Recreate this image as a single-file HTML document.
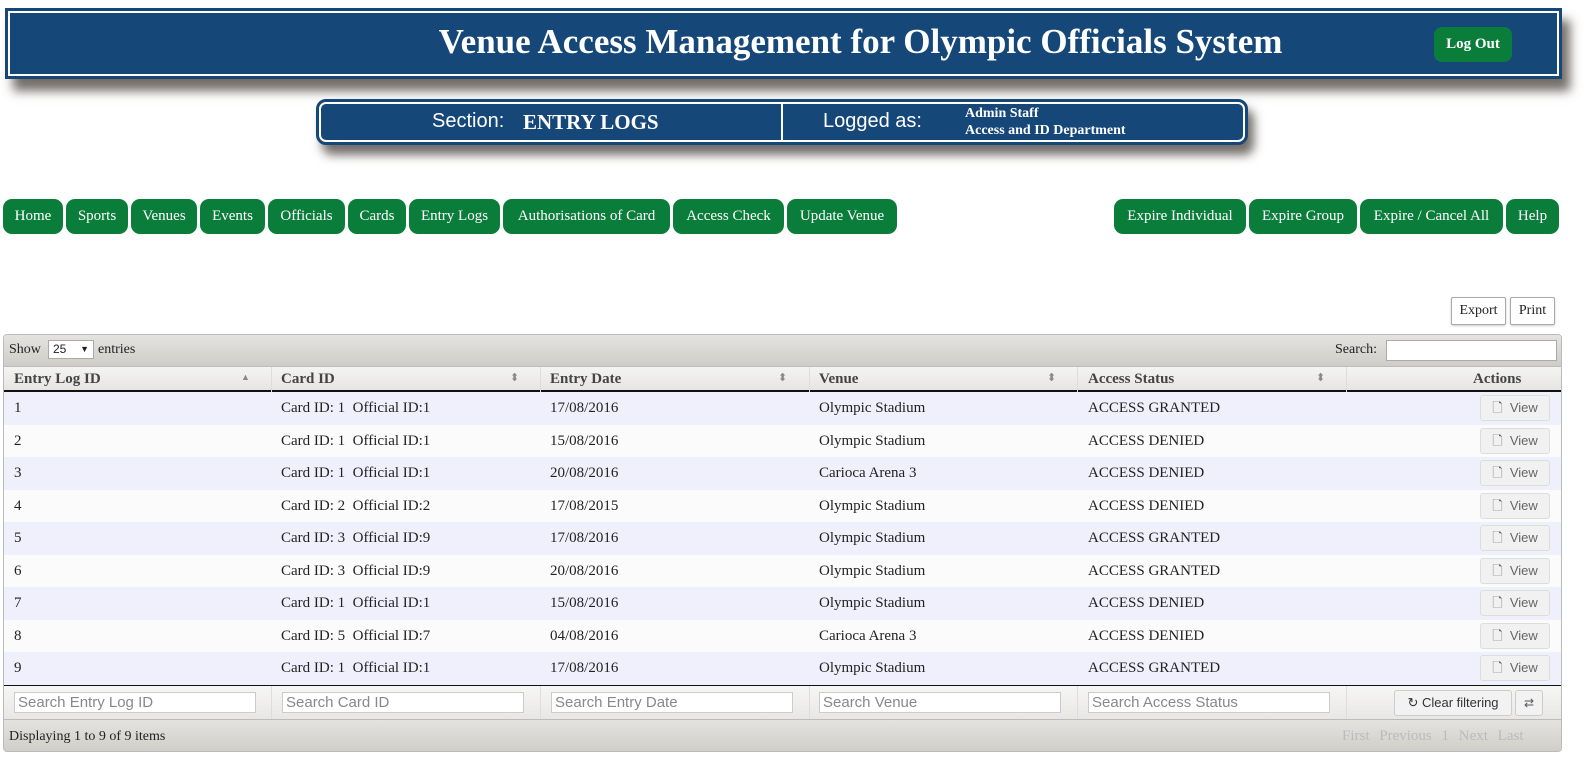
<!DOCTYPE html>
<html><head><meta charset="utf-8"><style>
*{box-sizing:border-box;margin:0;padding:0}
body{width:1593px;height:771px;background:#fff;font-family:"Liberation Serif",serif;position:relative;overflow:hidden;color:#222}
.abs{position:absolute}
#hdr{left:5px;top:8px;width:1557px;height:71px;background:#154778;border:2px solid #154778;outline:2px solid #fff;outline-offset:-5px;box-shadow:8px 12px 10px rgba(90,85,80,.85)}
#hdr h1{position:absolute;left:0;width:1707px;top:12px;text-align:center;color:#fff;font-size:35px;font-weight:bold}
#logout{left:1434px;top:27px;width:78px;height:35px;background:#0b7d3b;border-radius:8px;color:#fff;font-weight:bold;font-size:15px;text-align:center;line-height:35px}
#sec{left:316px;top:99px;width:932px;height:46px;background:#154778;border:2px solid #154778;outline:2px solid #fff;outline-offset:-5px;border-radius:10px;box-shadow:6px 10px 10px rgba(90,85,80,.85);color:#fff}
.nav{top:199px;height:35px;background:#0b7d3b;border-radius:9px;color:#fff;font-size:15px;text-align:center;line-height:35px}
.btn{background:#fff;border:1px solid #aaa;border-radius:2px;font-size:14px;text-align:center;line-height:26px;box-shadow:0 1px 2px rgba(0,0,0,.2)}
#tbl{left:3px;top:334px;width:1559px;height:418px;border:1px solid #bbb;border-radius:4px;background:#fff;overflow:hidden}
.bar{position:absolute;left:0;width:100%;background:linear-gradient(#e4e3df,#cfcdc8)}
.row{position:absolute;left:0;width:100%;height:32.5px;font-size:15px;line-height:32px}
.row span{position:absolute}
.vb{position:absolute;left:1476px;width:70px;height:26px;top:3px;border:1px solid #ddd;border-radius:3px;background:#f1f1f1;color:#666;font-family:"Liberation Sans",sans-serif;font-size:13px;line-height:24px;text-align:center}
.th{position:absolute;top:0;font-weight:bold;font-size:15px;color:#444;line-height:25px}
.vl{position:absolute;width:1px;background:#ddd}
.fi{position:absolute;top:6px;width:242px;height:21px;border:1px solid #ccc;background:#fff;font-family:"Liberation Sans",sans-serif;font-size:15px;color:#888;line-height:19px;padding-left:3px}
</style></head><body>
<div id="hdr" class="abs"><h1>Venue Access Management for Olympic Officials System</h1></div>
<div id="logout" class="abs">Log Out</div>
<div id="sec" class="abs">
 <div class="abs" style="left:114px;top:9px;font-family:'Liberation Sans',sans-serif;font-size:20px">Section:</div>
 <div class="abs" style="left:205px;top:9px;font-size:21px;font-weight:bold">ENTRY LOGS</div>
 <div class="abs" style="left:463px;top:2px;width:2px;height:38px;background:#fff"></div>
 <div class="abs" style="left:505px;top:9px;font-family:'Liberation Sans',sans-serif;font-size:20px">Logged as:</div>
 <div class="abs" style="left:647px;top:4px;font-size:14px;font-weight:bold;line-height:17px">Admin Staff<br>Access and ID Department</div>
</div>
<div class="abs nav" style="left:3px;width:60px">Home</div>
<div class="abs nav" style="left:66px;width:62px">Sports</div>
<div class="abs nav" style="left:131px;width:66px">Venues</div>
<div class="abs nav" style="left:200px;width:65px">Events</div>
<div class="abs nav" style="left:268px;width:77px">Officials</div>
<div class="abs nav" style="left:348px;width:58px">Cards</div>
<div class="abs nav" style="left:409px;width:91px">Entry Logs</div>
<div class="abs nav" style="left:503px;width:167px">Authorisations of Card</div>
<div class="abs nav" style="left:673px;width:111px">Access Check</div>
<div class="abs nav" style="left:787px;width:110px">Update Venue</div>
<div class="abs nav" style="left:1114px;width:132px">Expire Individual</div>
<div class="abs nav" style="left:1249px;width:108px">Expire Group</div>
<div class="abs nav" style="left:1360px;width:143px">Expire / Cancel All</div>
<div class="abs nav" style="left:1506px;width:53px">Help</div>
<div class="abs btn" style="left:1451px;top:297px;width:55px;height:28px">Export</div>
<div class="abs btn" style="left:1510px;top:297px;width:45px;height:28px">Print</div>
<div id="tbl" class="abs">
 <div class="bar" style="top:0;height:32px;border-bottom:1px solid #bbb;font-size:14px">
  <span class="abs" style="left:5px;top:7px">Show</span>
  <span class="abs" style="left:44px;top:5px;width:46px;height:19px;border:1px solid #aaa;background:#fff;padding-left:4px;line-height:17px;font-family:'Liberation Sans',sans-serif;font-size:12px">25 <span style="position:absolute;right:4px;font-size:9px">▼</span></span>
  <span class="abs" style="left:94px;top:7px">entries</span>
  <span class="abs" style="left:1331px;top:7px">Search:</span>
  <span class="abs" style="left:1382px;top:5px;width:171px;height:21px;border:1px solid #aaa;background:#fff"></span>
 </div>
 <div class="abs" style="top:32px;left:0;width:100%;height:25px;background:linear-gradient(#f4f4f2,#e6e5e2);border-bottom:2px solid #111">
  <span class="th" style="left:10px">Entry Log ID</span><span class="abs" style="left:237px;top:5px;font-size:9px;color:#888">▲</span>
  <span class="th" style="left:277px">Card ID</span><span class="abs" style="left:506px;top:4px;font-size:11px;color:#888">⬍</span>
  <span class="th" style="left:546px">Entry Date</span><span class="abs" style="left:774px;top:4px;font-size:11px;color:#888">⬍</span>
  <span class="th" style="left:815px">Venue</span><span class="abs" style="left:1043px;top:4px;font-size:11px;color:#888">⬍</span>
  <span class="th" style="left:1084px">Access Status</span><span class="abs" style="left:1312px;top:4px;font-size:11px;color:#888">⬍</span>
  <span class="th" style="left:1469px">Actions</span>
  <div class="vl" style="left:267px;top:0;height:25px"></div><div class="vl" style="left:536px;top:0;height:25px"></div><div class="vl" style="left:805px;top:0;height:25px"></div><div class="vl" style="left:1073px;top:0;height:25px"></div><div class="vl" style="left:1342px;top:0;height:25px"></div>
 </div>
 <div class="abs" style="top:57px;left:0;width:100%;height:293px">
  <div class="row" style="top:0;background:#f0f0fd"><span style="left:10px">1</span><span style="left:277px">Card ID: 1&nbsp; Official ID:1</span><span style="left:546px">17/08/2016</span><span style="left:815px">Olympic Stadium</span><span style="left:1084px">ACCESS GRANTED</span><div class="vb">🗋&nbsp; View</div></div>
  <div class="row" style="top:32.5px;background:#fbfbfb"><span style="left:10px">2</span><span style="left:277px">Card ID: 1&nbsp; Official ID:1</span><span style="left:546px">15/08/2016</span><span style="left:815px">Olympic Stadium</span><span style="left:1084px">ACCESS DENIED</span><div class="vb">🗋&nbsp; View</div></div>
  <div class="row" style="top:65px;background:#f0f0fd"><span style="left:10px">3</span><span style="left:277px">Card ID: 1&nbsp; Official ID:1</span><span style="left:546px">20/08/2016</span><span style="left:815px">Carioca Arena 3</span><span style="left:1084px">ACCESS DENIED</span><div class="vb">🗋&nbsp; View</div></div>
  <div class="row" style="top:97.5px;background:#fbfbfb"><span style="left:10px">4</span><span style="left:277px">Card ID: 2&nbsp; Official ID:2</span><span style="left:546px">17/08/2015</span><span style="left:815px">Olympic Stadium</span><span style="left:1084px">ACCESS DENIED</span><div class="vb">🗋&nbsp; View</div></div>
  <div class="row" style="top:130px;background:#f0f0fd"><span style="left:10px">5</span><span style="left:277px">Card ID: 3&nbsp; Official ID:9</span><span style="left:546px">17/08/2016</span><span style="left:815px">Olympic Stadium</span><span style="left:1084px">ACCESS GRANTED</span><div class="vb">🗋&nbsp; View</div></div>
  <div class="row" style="top:162.5px;background:#fbfbfb"><span style="left:10px">6</span><span style="left:277px">Card ID: 3&nbsp; Official ID:9</span><span style="left:546px">20/08/2016</span><span style="left:815px">Olympic Stadium</span><span style="left:1084px">ACCESS GRANTED</span><div class="vb">🗋&nbsp; View</div></div>
  <div class="row" style="top:195px;background:#f0f0fd"><span style="left:10px">7</span><span style="left:277px">Card ID: 1&nbsp; Official ID:1</span><span style="left:546px">15/08/2016</span><span style="left:815px">Olympic Stadium</span><span style="left:1084px">ACCESS DENIED</span><div class="vb">🗋&nbsp; View</div></div>
  <div class="row" style="top:227.5px;background:#fbfbfb"><span style="left:10px">8</span><span style="left:277px">Card ID: 5&nbsp; Official ID:7</span><span style="left:546px">04/08/2016</span><span style="left:815px">Carioca Arena 3</span><span style="left:1084px">ACCESS DENIED</span><div class="vb">🗋&nbsp; View</div></div>
  <div class="row" style="top:260px;background:#f0f0fd"><span style="left:10px">9</span><span style="left:277px">Card ID: 1&nbsp; Official ID:1</span><span style="left:546px">17/08/2016</span><span style="left:815px">Olympic Stadium</span><span style="left:1084px">ACCESS GRANTED</span><div class="vb">🗋&nbsp; View</div></div>
 </div>
 <div class="abs" style="top:350px;left:0;width:100%;height:34px;background:linear-gradient(#f6f6f4,#e8e7e4);border-top:1px solid #111">
  <div class="fi" style="left:10px">Search Entry Log ID</div>
  <div class="fi" style="left:278px">Search Card ID</div>
  <div class="fi" style="left:547px">Search Entry Date</div>
  <div class="fi" style="left:815px">Search Venue</div>
  <div class="fi" style="left:1084px">Search Access Status</div>
  <div class="vl" style="left:267px;top:0;height:34px"></div><div class="vl" style="left:536px;top:0;height:34px"></div><div class="vl" style="left:805px;top:0;height:34px"></div><div class="vl" style="left:1073px;top:0;height:34px"></div><div class="vl" style="left:1342px;top:0;height:34px"></div>
  <div class="abs" style="left:1390px;top:4px;width:118px;height:26px;border:1px solid #ccc;border-radius:3px;background:#f2f2f2;font-family:'Liberation Sans',sans-serif;font-size:13px;line-height:24px;text-align:center;color:#333">↻ Clear filtering</div>
  <div class="abs" style="left:1511px;top:4px;width:28px;height:26px;border:1px solid #ccc;border-radius:3px;background:#f2f2f2;font-size:12px;line-height:24px;text-align:center;color:#555">⇄</div>
 </div>
 <div class="bar" style="top:384px;height:34px;border-top:1px solid #bbb;font-size:14px">
  <span class="abs" style="left:5px;top:9px">Displaying 1 to 9 of 9 items</span>
  <span class="abs" style="left:1338px;top:8px;font-size:15px;color:#bbb;word-spacing:6px">First Previous 1 Next Last</span>
 </div>
</div>
</body></html>
